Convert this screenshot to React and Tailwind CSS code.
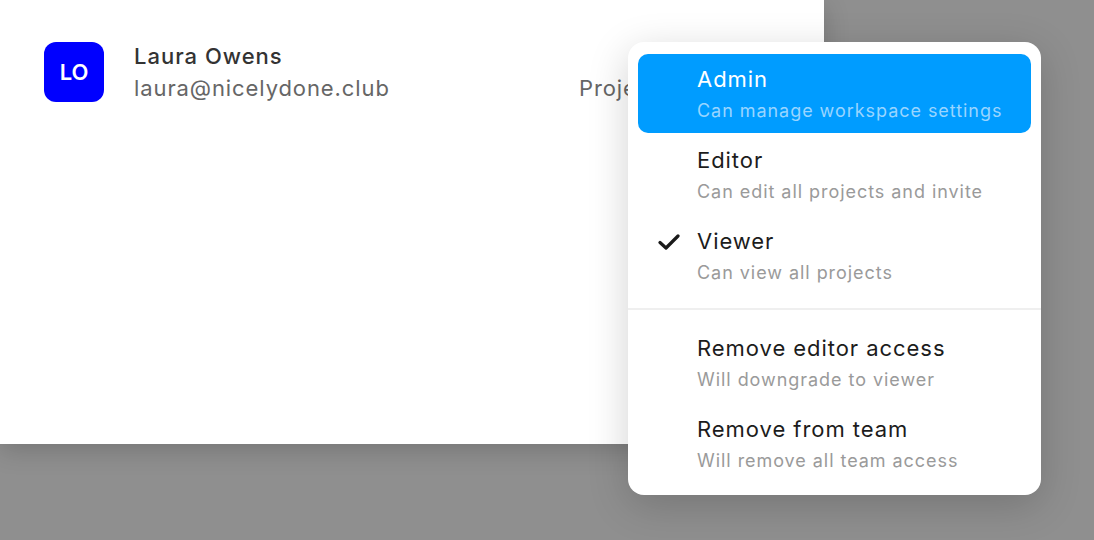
import React from "react";

function Item({ title, sub, active, checked }) {
  return (
    <div
      className={
        "relative h-[79px] rounded-[10px] pl-[59px] pt-[10px] " +
        (active ? "bg-[#009cff]" : "")
      }
    >
      {checked && (
        <svg
          className="absolute left-[20px] top-[18px]"
          width="22"
          height="16"
          viewBox="0 0 22 16"
          fill="none"
        >
          <path
            d="M2 8.5 L8 14 L20 2"
            stroke="#1a1a1a"
            strokeWidth="3.2"
            strokeLinecap="round"
            strokeLinejoin="round"
          />
        </svg>
      )}
      <div
        className={
          "text-[22px] leading-[30px] tracking-[0.95px] " +
          (active ? "text-white" : "text-[#1c1c1c]")
        }
      >
        {title}
      </div>
      <div
        className={
          "mt-[4px] text-[18px] leading-[26px] tracking-[0.95px] " +
          (active ? "text-[#99d5ff]" : "text-[#9a9a9a]")
        }
      >
        {sub}
      </div>
    </div>
  );
}

export default function App() {
  return (
    <div
      className="relative w-[1094px] h-[540px] overflow-hidden bg-[#8f8f8f]"
      style={{ fontFamily: "Inter, 'Noto Sans', sans-serif" }}
    >
      <div className="w-[824px] h-[444px] bg-white shadow-[0_6px_24px_rgba(0,0,0,0.18)]">
        <div className="flex items-start pl-[44px] pt-[42px]">
          <div className="w-[60px] h-[60px] rounded-[12px] bg-[#0000ff] flex items-center justify-center text-white text-[22px] font-semibold">
            LO
          </div>
          <div className="ml-[30px] w-[445px] -mt-[1px]">
            <div className="text-[22px] leading-[30px] text-[#333333] font-medium tracking-[1px]">
              Laura Owens
            </div>
            <div className="mt-[2px] text-[22px] leading-[30px] text-[#666666] tracking-[0.9px]">
              laura@nicelydone.club
            </div>
          </div>
          <div className="mt-[31px] text-[22px] leading-[30px] text-[#666666] tracking-[0.9px] whitespace-nowrap">
            Project viewer
          </div>
        </div>
      </div>

      <div className="absolute left-[628px] top-[42px] w-[413px] rounded-[16px] bg-white px-[10px] py-[12px] shadow-[0_10px_40px_rgba(0,0,0,0.18)]">
        <div className="flex flex-col gap-[2px]">
          <Item title="Admin" sub="Can manage workspace settings" active />
          <Item title="Editor" sub="Can edit all projects and invite" />
          <Item title="Viewer" sub="Can view all projects" checked />
        </div>
        <div className="-mx-[10px] my-[13px] h-[2px] bg-[#efefef]" />
        <div className="flex flex-col gap-[2px]">
          <Item title="Remove editor access" sub="Will downgrade to viewer" />
          <Item title="Remove from team" sub="Will remove all team access" />
        </div>
      </div>
    </div>
  );
}
